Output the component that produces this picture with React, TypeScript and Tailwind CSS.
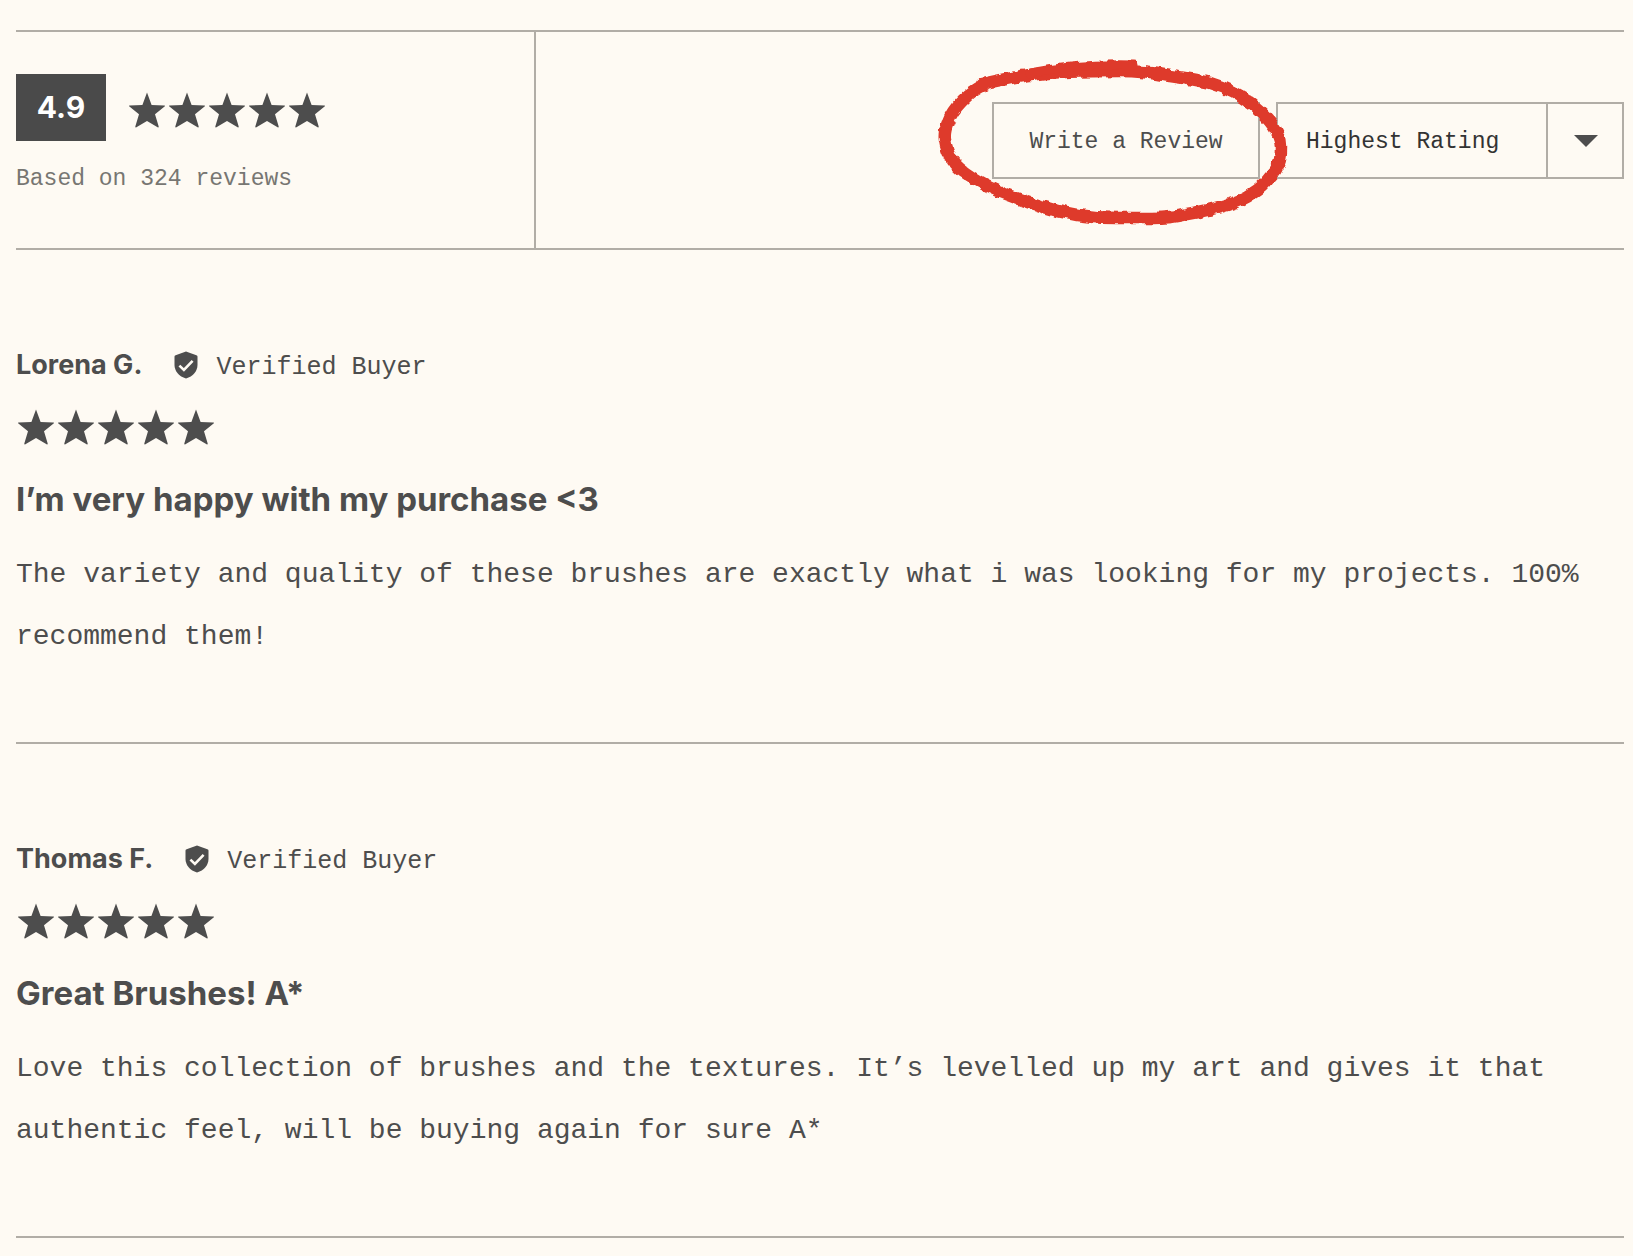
import { useState } from "react";

type reviewProps = {
  id: number;
  author: string;
  title: string;
  text: string;
};

const reviews: reviewProps[] = [
  {
    id: 1,
    author: "Lorena G.",
    title: "I’m very happy with my purchase <3",
    text: "The variety and quality of these brushes are exactly what i was looking for my projects. 100% recommend them!",
  },
  {
    id: 2,
    author: "Thomas F.",
    title: "Great Brushes! A*",
    text: "Love this collection of brushes and the textures. It’s levelled up my art and gives it that authentic feel, will be buying again for sure A*",
  },
];

function Stars() {
  return (
    <div className="flex gap-1" role="img" aria-label="5 out of 5 stars">
      {[1, 2, 3, 4, 5].map((star) => (
        <svg
          key={star}
          viewBox="0 0 36 36"
          className="w-9 h-9 fill-[#4d4d4d]"
          aria-hidden="true"
        >
          <path d="M18 0.6 L22.6 12.9 L35.4 13.4 Q36.6 13.6 35.6 14.6 L26 22.2 L29.7 34.6 Q29.7 36 28.6 35.3 L18 29 L7.4 35.3 Q6.3 36 6.3 34.6 L10 22.2 L0.4 14.6 Q-0.6 13.6 0.6 13.4 L13.4 12.9 Z" />
        </svg>
      ))}
    </div>
  );
}

function VerifiedIcon() {
  return (
    <svg viewBox="0 0 24 28" className="w-6 h-7" aria-hidden="true">
      <path
        d="M12 0.5 L22.4 4.2 Q23.5 4.6 23.5 5.8 V14 C23.5 20 19 25.6 12 27.5 C5 25.6 0.5 20 0.5 14 V5.8 Q0.5 4.6 1.6 4.2 Z"
        fill="#4d4d4d"
      />
      <path
        d="M5.4 14.6 L9.9 18.9 L18.6 9.8"
        fill="none"
        stroke="#fefaf3"
        strokeWidth="2.6"
      />
    </svg>
  );
}

function MarkerCircle() {
  return (
    <svg
      viewBox="0 0 380 200"
      className="absolute z-10 -left-[72px] -top-[62px] w-[380px] h-[200px] max-w-none pointer-events-none"
      fill="none"
      stroke="#de3a2b"
      strokeLinecap="round"
      strokeLinejoin="round"
      aria-hidden="true"
    >
      <filter
        id="rough"
        x="-5%"
        y="-5%"
        width="110%"
        height="110%"
        colorInterpolationFilters="sRGB"
      >
        <feTurbulence type="fractalNoise" baseFrequency="0.16" numOctaves="1" seed="4" />
        <feDisplacementMap
          in="SourceGraphic"
          scale="6"
          xChannelSelector="R"
          yChannelSelector="G"
        />
      </filter>
      <g filter="url(#rough)">
        <path
          strokeWidth="12.5"
          d="M62 44 C80 40 98 36 117 34 C140 31 165 31 200 31 C217 31 234 33 250 36 C264 38 277 40 290 43 C307 48 320 55 333 65 C345 75 361 90 361 107 C361 112 361 118 359 123 C357 129 354 133 350 137 C345 144 340 149 333 153 C325 159 317 162 307 165 C294 169 280 172 267 174 C256 177 245 178 233 178 C220 178 209 178 197 178 C183 178 170 177 157 175 C144 173 132 170 120 166 C106 162 93 157 80 152 C71 148 62 144 53 138 C45 133 37 128 32 120 C28 113 26 107 25 100 C24 94 26 87 28 82 C31 73 37 66 43 60 C49 54 56 49 64 45"
        />
        <path strokeWidth="9" d="M110 33 C140 27 175 24 213 25" />
      </g>
    </svg>
  );
}

function Review({ review }: { review: reviewProps }) {
  return (
    <article className="border-b-2 border-[#b1ada6] pt-[99px] pb-[74px]">
      <div className="flex items-baseline h-8">
        <span className="font-['Inter'] font-bold text-[27px] leading-8">
          {review.author}
        </span>
        <span className="self-center ml-8 mr-[18px]">
          <VerifiedIcon />
        </span>
        <span className="text-[25px] leading-8">Verified Buyer</span>
      </div>
      <div className="mt-7 pl-0.5">
        <Stars />
      </div>
      <h3 className="mt-[34px] font-['Inter'] font-bold text-[33px] leading-10">
        {review.title}
      </h3>
      <p className="mt-[25px] text-[28px] leading-[62px]">{review.text}</p>
    </article>
  );
}

export default function App() {
  const [sort, setSort] = useState("highest");

  return (
    <main className="min-h-screen bg-[#fefaf3] pt-[30px] pl-4 pr-[9px] pb-[18px] text-[#4d4d4d] font-['Liberation_Mono',monospace]">
      <header className="flex border-y-2 border-[#b1ada6]">
        <div className="w-[520px] shrink-0 border-r-2 border-[#b1ada6] pt-[42px] pb-[51px]">
          <div className="flex items-center gap-[23px]">
            <span className="w-[90px] h-[67px] bg-[#4a4a4a] text-white text-center font-['Inter'] font-bold text-[30px] leading-[66px]">
              4.9
            </span>
            <div className="pt-1">
              <Stars />
            </div>
          </div>
          <p className="mt-5 text-[23px] leading-9 text-[#777672]">
            Based on 324 reviews
          </p>
        </div>
        <div className="flex flex-1 items-center justify-end gap-4">
          <div className="relative">
            <button className="block w-[268px] h-[77px] pt-1 border-2 border-[#b1ada6] text-[23px]">
              Write a Review
            </button>
            <MarkerCircle />
          </div>
          <div className="relative">
            <select
              aria-label="Sort reviews"
              value={sort}
              onChange={(e) => setSort(e.target.value)}
              className="block appearance-none w-[348px] h-[77px] border-2 border-[#b1ada6] bg-transparent pt-1 pl-7 pr-20 text-[23px] text-[#333333]"
            >
              <option value="highest">Highest Rating</option>
              <option value="lowest">Lowest Rating</option>
              <option value="recent">Most Recent</option>
            </select>
            <span className="absolute inset-y-0 right-0 w-[78px] pt-0.5 flex items-center justify-center border-l-2 border-[#b1ada6] pointer-events-none">
              <svg viewBox="0 0 24 12" className="w-6 h-3" aria-hidden="true">
                <path d="M0 0 H24 L12 12 Z" fill="#4d4d4d" />
              </svg>
            </span>
          </div>
        </div>
      </header>
      {reviews.map((review) => (
        <Review key={review.id} review={review} />
      ))}
    </main>
  );
}
